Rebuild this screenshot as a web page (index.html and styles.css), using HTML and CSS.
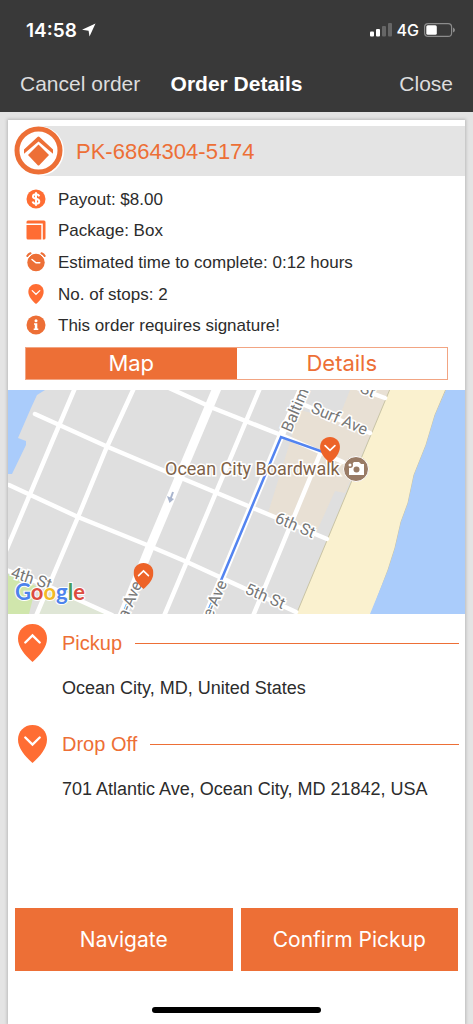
FILE: index.html
```html
<!DOCTYPE html>
<html lang="en">
<head>
<meta charset="utf-8">
<meta name="viewport" content="width=device-width, initial-scale=1">
<title>Order Details</title>
<link rel="stylesheet" href="styles.css">
</head>
<body>
<svg class="defs" aria-hidden="true">
  <symbol id="pin-up" viewBox="0 0 29 38">
    <path fill="currentColor" d="M14.500 0C6.300 0 0 6.300 0 14.500C0 23 6.500 31 14.500 38C22.500 31 29 23 29 14.500C29 6.300 22.700 0 14.500 0Z"/>
    <path fill="none" stroke="#fff" stroke-width="2.400" stroke-linecap="round" d="M7.300 18.500L14.500 11.500L21.700 18.500"/>
  </symbol>
  <symbol id="pin-down" viewBox="0 0 29 38">
    <path fill="currentColor" d="M14.500 0C6.300 0 0 6.300 0 14.500C0 23 6.500 31 14.500 38C22.500 31 29 23 29 14.500C29 6.300 22.700 0 14.500 0Z"/>
    <path fill="none" stroke="#fff" stroke-width="2.400" stroke-linecap="round" d="M7.300 12.500L14.500 19.500L21.700 12.500"/>
  </symbol>
</svg>
<div class="screen">
  <header class="top">
    <div class="status">
      <div class="status-group">
        <span class="time">14:58</span>
        <svg width="14" height="14" viewBox="0 0 14 14"><path fill="#fff" d="M13.500 .5L7.500 13.500L6.600 7.800L0 6.800Z"/></svg>
      </div>
      <div class="status-group">
        <svg width="22" height="14" viewBox="0 0 22 14"><g fill="#fff"><rect y="8.500" width="4" height="5" rx="1"/><rect x="6" y="6" width="4" height="7.500" rx="1"/></g><g fill="#666"><rect x="12" y="3" width="4" height="10.500" rx="1"/><rect x="18" width="4" height="13.500" rx="1"/></g></svg>
        <span class="network">4G</span>
        <svg width="31" height="14" viewBox="0 0 31 14"><rect x=".6" y=".6" width="27" height="12.800" rx="3.500" fill="none" stroke="#8c8c8c" stroke-width="1.200"/><rect x="2.300" y="2.200" width="10.500" height="9.600" rx="1.500" fill="#fff"/><path fill="#8c8c8c" d="M29 4.500Q31 5.500 31 7T29 9.500Z"/></svg>
      </div>
    </div>
    <nav class="nav">
      <button class="nav-btn" type="button">Cancel order</button>
      <h1 class="title">Order Details</h1>
      <button class="nav-btn nav-end" type="button">Close</button>
    </nav>
  </header>

  <main class="card">
    <div class="order-bar">
      <svg class="logo" viewBox="0 0 50 50"><circle cx="25" cy="25" r="25" fill="#fff"/><circle cx="24.500" cy="24.500" r="21.500" fill="#fff" stroke="#ed6f36" stroke-width="5"/><path fill="#ed6f36" d="M24.500 18.500L35 29L25.500 39Q24.500 40 23.500 39L14 29Z"/><path fill="#ed6f36" d="M23.500 11Q24.500 10 25.500 11L39 23.500V27.800L24.500 15.500L10 27.800V23.500Z"/></svg>
      <h2 class="order-id">PK-6864304-5174</h2>
    </div>

    <ul class="facts">
      <li><svg class="ico" viewBox="0 0 20 20"><circle cx="10" cy="10" r="9.500" fill="#ff6d33"/><path fill="none" stroke="#fff" stroke-width="2" d="M13.200 7.300Q12.500 5.300 10 5.300Q7 5.300 7 7.500Q7 9.200 10 9.800Q13.300 10.500 13.300 12.500Q13.300 14.800 10 14.800Q7.200 14.800 6.600 12.500M10 3.200V16.800"/></svg><span>Payout: $8.00</span></li>
      <li><svg class="ico" viewBox="0 0 20 20"><path fill="#ff6d33" d="M2 .5H18Q19.500 .5 19.500 2V18Q19.500 19.500 18 19.500H16.800V3.400H.5V2Q.5 .5 2 .5ZM.5 4.900H15.300V19.500H2Q.5 19.500 .5 18Z"/></svg><span>Package: Box</span></li>
      <li><svg class="ico" viewBox="0 0 20 20"><circle cx="10" cy="10.500" r="8.700" fill="#ed6f36"/><path fill="none" stroke="#fff" stroke-width="1" d="M1.500 6.500L6 2M18.500 6.500L14 2"/><path fill="none" stroke="#ed6f36" stroke-width="2" stroke-linecap="round" d="M1.300 4Q2.300 2.200 4.500 1.300M18.700 4Q17.700 2.200 15.500 1.300"/><path fill="none" stroke="#fff" stroke-width="1.500" stroke-linecap="round" d="M6 7.500L10 10.800H13.800"/></svg><span>Estimated time to complete: 0:12 hours</span></li>
      <li><svg class="ico ico-pin"><use href="#pin-down"/></svg><span>No. of stops: 2</span></li>
      <li><svg class="ico" viewBox="0 0 20 20"><circle cx="10" cy="10" r="9.500" fill="#ed6f36"/><circle cx="10" cy="5.800" r="1.500" fill="#fff"/><path fill="#fff" d="M8 8.300H11.300V13.500H12.300V15H7.700V13.500H8.800V9.800H8Z"/></svg><span>This order requires signature!</span></li>
    </ul>

    <div class="tabs" role="tablist">
      <button class="tab tab-on" type="button" role="tab" aria-selected="true">Map</button>
      <button class="tab" type="button" role="tab" aria-selected="false">Details</button>
    </div>

    <svg class="map" viewBox="0 0 457 224" role="img" aria-label="Map of the route">
      <rect width="457" height="224" fill="#dfdfdf"/>
      <path fill="#aaccfb" d="M0 0H37L29 5L23 18L10 48L18 51V55L4 84H0Z"/>
      <path fill="#e8e0d4" d="M342 0H382L337 103L327 101L308 143L260 123L292 20L330 30Z"/>
      <path fill="#d0e6ac" d="M0 184L28 196L21 224H0Z"/>
      <path fill="#dfe6d6" d="M42 200L102 224H30Z"/>
      <path fill="#faf1cf" stroke="#c9c4a5" d="M382 -1L288 225H363L380 180L387 158L393 132L400 113L406 85L418 55L427 25L438 -1Z"/>
      <path fill="#aaccfb" d="M457 0H438L427 25L418 55L406 85L400 113L393 132L387 158L380 180L362 224H457Z"/>
      <g fill="none" stroke="#fff" stroke-width="4.500" stroke-linecap="round">
        <path d="M67 -2L44 52L-2 161M126 -2L98 59L70 127L28 226M252 -2L156 226M312 64L245 226"/>
        <path d="M27 24L100 57L159 82L245 118L319 149M1 95L70 127L139 155L179 172L288 222M161 -2L205 18L273 45L335 72M-2 180L42 197L104 225M292 13L362 43M344 -4L377 8"/>
        <path stroke-width="7" d="M294 -2L272 48L198 226"/>
        <path stroke-width="9" d="M209 -2L142 157L114 226"/>
      </g>
      <path fill="none" stroke="#5384f0" stroke-width="2.500" d="M199 224L273 47L318 63M115 224L132 184"/>
      <path fill="none" stroke="#a9b5ce" stroke-width="2" d="M165 102L162.500 109"/><path fill="#a9b5ce" d="M159 106L166 109L161.500 113Z"/>
      <g class="street">
        <text transform="translate(283 43) rotate(-67)">Baltimore</text>
        <text transform="translate(302 22) rotate(23)">Surf Ave</text>
        <text transform="translate(351 2) rotate(23)">St</text>
        <text transform="translate(266 132) rotate(23)">6th St</text>
        <text transform="translate(236 203) rotate(23)">5th St</text>
        <text transform="translate(2 187) rotate(18)">4th St</text>
        <text transform="translate(119 230) rotate(-67)">a-Ave</text>
        <text transform="translate(204 229) rotate(-67)">e-Ave</text>
      </g>
      <text class="place" x="157" y="85">Ocean City Boardwalk</text>
      <circle cx="348" cy="79" r="12.500" fill="#997b65" stroke="#fff"/>
      <path fill="#fff" d="M341 74H344L346 72H351L353 74H356V85H341Z"/><circle cx="348.500" cy="79.500" r="3" fill="#997b65"/><circle cx="342" cy="75" r="3" fill="#997b65"/><circle cx="342" cy="75" r="1.500" fill="#fff"/>
      <g color="#ed6328"><use href="#pin-down" x="312" y="47" width="20" height="26"/><use href="#pin-up" x="125.500" y="173" width="20" height="26"/></g>
      <text class="google" x="7" y="210"><tspan fill="#4d83ec">G</tspan><tspan fill="#dc4d3f">o</tspan><tspan fill="#f3b928">o</tspan><tspan fill="#4d83ec">g</tspan><tspan fill="#4a9c58">l</tspan><tspan fill="#dc4d3f">e</tspan></text>
    </svg>

    <section class="stop">
      <svg class="pin"><use href="#pin-up"/></svg>
      <h3 class="stop-name">Pickup</h3>
      <p class="address">Ocean City, MD, United States</p>
    </section>
    <section class="stop">
      <svg class="pin"><use href="#pin-down"/></svg>
      <h3 class="stop-name">Drop Off</h3>
      <p class="address">701 Atlantic Ave, Ocean City, MD 21842, USA</p>
    </section>

    <div class="actions">
      <button class="action" type="button">Navigate</button>
      <button class="action" type="button">Confirm Pickup</button>
    </div>
    <div class="home"></div>
  </main>
</div>
</body>
</html>
```
FILE: styles.css
```css
* { box-sizing: border-box; margin: 0; padding: 0; }
body { background: #e4e4e4; color: #2c2c2c; font-family: "Liberation Sans", Arial, sans-serif; }
button { border: 0; border-radius: 0; background: none; font: inherit; color: inherit; cursor: pointer; }
svg { display: block; flex: none; }
.defs { position: absolute; width: 0; height: 0; }
.screen { min-height: 100vh; display: flex; flex-direction: column; }

.top { background: #393939; color: #fff; height: 112px; }
.status { height: 56px; padding: 4px 18px 0 26px; display: flex; align-items: center; justify-content: space-between; font-family: Inter, sans-serif; }
.status-group { display: flex; align-items: center; gap: 5px; }
.time { font-size: 19px; font-weight: 600; }
.network { font-size: 16px; font-weight: 500; }
.nav { height: 56px; padding: 0 20px; display: grid; grid-template-columns: 1fr auto 1fr; align-items: center; }
.nav-btn { font-size: 21px; color: #ddd; text-align: left; white-space: nowrap; }
.nav-end { text-align: right; }
.title { font-size: 21px; font-weight: 700; }

.card { flex: 1; margin: 8px 8px 0; padding-top: 6px; background: #fff; box-shadow: 0 0 3px 1px #bbb; display: flex; flex-direction: column; }
.order-bar { height: 50px; margin-left: 30px; background: #e4e4e4; display: flex; align-items: center; gap: 12px; }
.logo { width: 50px; height: 50px; margin-left: -24px; }
.order-id { padding-top: 2px; font-size: 22px; font-weight: 400; color: #ed6f36; }

.facts { list-style: none; height: 158px; margin-top: 7px; padding: 0 18px; display: grid; grid-auto-rows: 1fr; font-size: 17px; }
.facts li { display: flex; align-items: center; gap: 12px; }
.facts span { padding-top: 2px; }
.ico { width: 20px; height: 20px; color: #ff6d33; }
.tabs { height: 33px; margin: 6px 17px 10px; border: 1px solid #f2a583; display: grid; grid-template-columns: 1fr 1fr; }
.tab { font-family: Inter, sans-serif; font-size: 22px; line-height: 31px; color: #ed6f36; }
.tab-on { background: #ed6f36; color: #fff; }

.map { width: 100%; height: auto; }
.street { font: 16px Roboto, sans-serif; fill: #777; stroke: #fff; stroke-width: 3px; paint-order: stroke; }
.place { font: 18px Roboto, sans-serif; fill: #806248; stroke: #fff; stroke-width: 3px; paint-order: stroke; }
.google { font: 700 22px Lato, sans-serif; stroke: #fff; stroke-width: 2px; paint-order: stroke; }

.stop { padding: 10px 6px 0 10px; display: grid; grid-template-columns: 29px 1fr; column-gap: 15px; }
.pin { width: 29px; height: 38px; color: #ff6d33; }
.stop-name { display: flex; align-items: center; gap: 13px; font-size: 20px; font-weight: 400; color: #ed6f36; }
.stop-name::after { content: ""; flex: 1; height: 1px; background: #ed6f36; }
.address { grid-column: 2; height: 53px; padding-top: 15px; font-size: 18px; line-height: 22px; }

.actions { margin-top: auto; padding: 0 7px; display: grid; grid-template-columns: 1fr 1fr; gap: 8px; }
.action { height: 63px; background: #ed6f36; color: #fff; font-family: Inter, sans-serif; font-size: 21px; }
.home { width: 169px; height: 6px; margin: 36px auto 11px; border-radius: 3px; background: #000; }
```
